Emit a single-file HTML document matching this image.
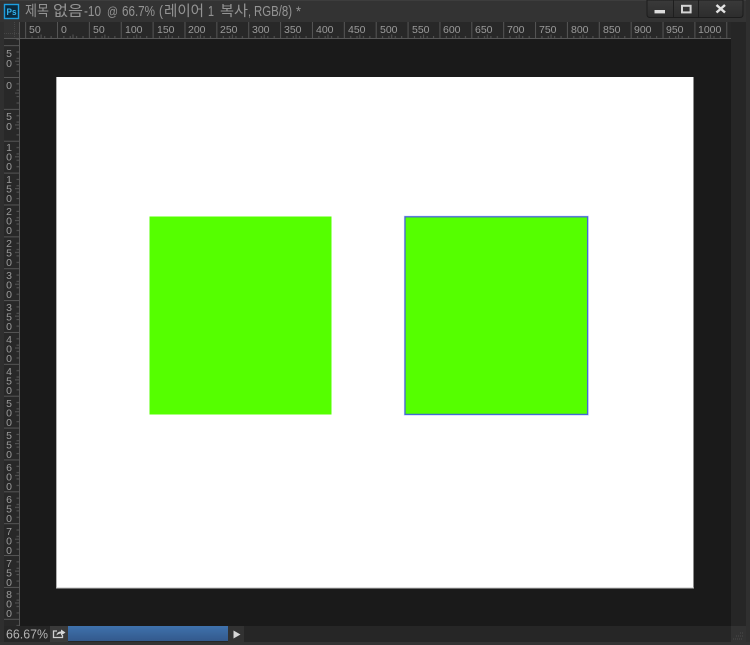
<!DOCTYPE html>
<html>
<head>
<meta charset="utf-8">
<style>
html,body{margin:0;padding:0;width:750px;height:645px;overflow:hidden;background:#2f2f2f}
svg{display:block}
text{font-family:"Liberation Sans","Noto Sans CJK KR",sans-serif}
</style>
</head>
<body>
<svg width="750" height="645" viewBox="0 0 750 645" xmlns="http://www.w3.org/2000/svg">
<defs>
<filter id="soft" x="-5%" y="-5%" width="110%" height="110%"><feGaussianBlur stdDeviation="0.35"/></filter>
<filter id="soft2" x="-5%" y="-5%" width="110%" height="110%"><feGaussianBlur stdDeviation="0.25"/></filter>
<pattern id="ht" x="57" y="22" width="31.87" height="17" patternUnits="userSpaceOnUse">
<path d="M0.5 0V17M6.9 14V17M13.2 14V17M19.6 14V17M26 14V17M16 12.5V17" stroke="#555555" stroke-width="1" fill="none"/>
</pattern>
<pattern id="vt" x="4" y="77" width="16" height="31.87" patternUnits="userSpaceOnUse">
<path d="M0 0.5H16M12.5 6.9H16M12.5 13.2H16M12.5 19.6H16M12.5 26H16M11 16H16" stroke="#555555" stroke-width="1" fill="none"/>
</pattern>
<linearGradient id="bar" x1="0" y1="0" x2="0" y2="1"><stop offset="0" stop-color="#3f72ad"/><stop offset="1" stop-color="#33598c"/></linearGradient>
<linearGradient id="btn" x1="0" y1="0" x2="0" y2="1"><stop offset="0" stop-color="#3a3a3a"/><stop offset="1" stop-color="#2d2d2d"/></linearGradient>
</defs>

<rect width="750" height="645" fill="#2f2f2f"/>
<rect x="0" y="0" width="750" height="22" fill="#333333"/>
<rect x="0" y="0" width="750" height="1" fill="#3d3d3d"/>

<!-- Ps logo -->
<rect x="4.5" y="4.5" width="14" height="14" fill="#0b2b3f" stroke="#1d9fe0" stroke-width="1.4"/>
<text x="6.5" y="15" font-size="9.5" font-weight="bold" fill="#36b3ee" textLength="10" lengthAdjust="spacingAndGlyphs" filter="url(#soft2)">Ps</text>

<!-- Title -->
<g font-size="14" fill="#949494" filter="url(#soft)">
<text x="25" y="16" font-size="14.5" textLength="24" lengthAdjust="spacingAndGlyphs">제목</text>
<text x="53" y="16" font-size="14.5" textLength="30" lengthAdjust="spacingAndGlyphs">없음</text>
<text x="84" y="16" font-size="15" textLength="17" lengthAdjust="spacingAndGlyphs">-10</text>
<text x="107" y="16" font-size="13" textLength="11" lengthAdjust="spacingAndGlyphs">@</text>
<text x="122" y="16" font-size="15" textLength="33" lengthAdjust="spacingAndGlyphs">66.7%</text>
<text x="159" y="16" font-size="15" textLength="4" lengthAdjust="spacingAndGlyphs">(</text>
<text x="164" y="16" font-size="14.5" textLength="40" lengthAdjust="spacingAndGlyphs">레이어</text>
<text x="208" y="16" font-size="15" textLength="6" lengthAdjust="spacingAndGlyphs">1</text>
<text x="220" y="16" font-size="14.5" textLength="28" lengthAdjust="spacingAndGlyphs">복사</text>
<text x="248" y="16" textLength="3" lengthAdjust="spacingAndGlyphs">,</text>
<text x="254" y="16" font-size="15" textLength="38" lengthAdjust="spacingAndGlyphs">RGB/8)</text>
<text x="296" y="16" textLength="5" lengthAdjust="spacingAndGlyphs">*</text>
</g>

<!-- Window buttons -->
<path d="M647 0V14.5Q647 17.5 650 17.5H740Q743 17.5 743 14.5V0Z" fill="url(#btn)" stroke="#1c1c1c"/>
<path d="M673.5 0V17M698.5 0V17" stroke="#1e1e1e"/>
<rect x="654.5" y="10" width="10.5" height="3.4" fill="#dcdcdc"/>
<rect x="682" y="5.8" width="8.6" height="6.6" fill="none" stroke="#d4d4d4" stroke-width="2"/>
<path d="M716.5 5L725 12.5M725 5L716.5 12.5" stroke="#e2e2e2" stroke-width="2.5" fill="none"/>

<!-- Rulers -->
<rect x="4" y="22" width="727" height="17" fill="#282828"/>
<rect x="4" y="22" width="16" height="604" fill="#282828"/>
<rect x="20" y="22" width="711" height="16" fill="url(#ht)"/>
<rect x="4" y="39" width="16" height="587" fill="url(#vt)"/>
<rect x="4" y="22" width="15" height="16" fill="#333333"/>
<path d="M4 33.5H19M14.5 22V38" stroke="#464646" stroke-dasharray="1 1"/>
<rect x="4" y="38" width="727" height="1" fill="#575757"/>
<rect x="19" y="22" width="1" height="604" fill="#575757"/>

<g font-size="10.5" fill="#9a9a9a" filter="url(#soft)">
<text x="29" y="33">50</text>
<text x="61" y="33">0</text>
<text x="93" y="33">50</text>
<text x="125" y="33">100</text>
<text x="157" y="33">150</text>
<text x="188" y="33">200</text>
<text x="220" y="33">250</text>
<text x="252" y="33">300</text>
<text x="284" y="33">350</text>
<text x="316" y="33">400</text>
<text x="348" y="33">450</text>
<text x="380" y="33">500</text>
<text x="412" y="33">550</text>
<text x="443" y="33">600</text>
<text x="475" y="33">650</text>
<text x="507" y="33">700</text>
<text x="539" y="33">750</text>
<text x="571" y="33">800</text>
<text x="603" y="33">850</text>
<text x="634" y="33">900</text>
<text x="666" y="33">950</text>
<text x="698" y="33">1000</text>
</g>

<g font-size="10.5" fill="#9a9a9a" text-anchor="middle" filter="url(#soft)">
<text x="9" y="57">5</text><text x="9" y="67">0</text>
<text x="9" y="89">0</text>
<text x="9" y="120">5</text><text x="9" y="130">0</text>
<text x="9" y="151">1</text><text x="9" y="160.5">0</text><text x="9" y="170">0</text>
<text x="9" y="183">1</text><text x="9" y="192.5">5</text><text x="9" y="202">0</text>
<text x="9" y="215">2</text><text x="9" y="224.5">0</text><text x="9" y="234">0</text>
<text x="9" y="247">2</text><text x="9" y="256.5">5</text><text x="9" y="266">0</text>
<text x="9" y="279">3</text><text x="9" y="288.5">0</text><text x="9" y="298">0</text>
<text x="9" y="311">3</text><text x="9" y="320.5">5</text><text x="9" y="330">0</text>
<text x="9" y="343">4</text><text x="9" y="352.5">0</text><text x="9" y="362">0</text>
<text x="9" y="375">4</text><text x="9" y="384.5">5</text><text x="9" y="394">0</text>
<text x="9" y="407">5</text><text x="9" y="416.5">0</text><text x="9" y="426">0</text>
<text x="9" y="439">5</text><text x="9" y="448.5">5</text><text x="9" y="458">0</text>
<text x="9" y="471">6</text><text x="9" y="480.5">0</text><text x="9" y="490">0</text>
<text x="9" y="503">6</text><text x="9" y="512.5">5</text><text x="9" y="522">0</text>
<text x="9" y="535">7</text><text x="9" y="544.5">0</text><text x="9" y="554">0</text>
<text x="9" y="567">7</text><text x="9" y="576.5">5</text><text x="9" y="586">0</text>
<text x="9" y="598">8</text><text x="9" y="607.5">0</text><text x="9" y="617">0</text>
</g>

<!-- Workspace -->
<rect x="20" y="39" width="711" height="587" fill="#1a1a1a"/>
<rect x="731" y="22" width="15" height="604" fill="#262626"/>
<rect x="746" y="0" width="4" height="645" fill="#2f2f2f"/>

<!-- Canvas -->
<rect x="56.5" y="77" width="637" height="511" fill="#ffffff"/>
<rect x="56" y="77" width="1" height="511" fill="#b0b0b0"/>
<rect x="56" y="587.5" width="638" height="1" fill="#c0c0c0"/>

<!-- Shapes -->
<rect x="149.5" y="216.5" width="182" height="198" fill="#55ff00"/>
<rect x="404.2" y="215.9" width="184.2" height="199.6" fill="none" stroke="#dfe3ff" stroke-width="0.8"/>
<rect x="405" y="216.8" width="182.6" height="197.6" fill="#55ff00" stroke="#4468d4" stroke-width="1.3"/>

<!-- Bottom bar -->
<rect x="0" y="626" width="746" height="16" fill="#262626"/>
<rect x="0" y="642" width="750" height="3" fill="#333333"/>
<rect x="0" y="626" width="4" height="16" fill="#2f2f2f"/>
<text x="6" y="638.5" font-size="13" fill="#b4b4b4" textLength="42" lengthAdjust="spacingAndGlyphs" filter="url(#soft2)">66.67%</text>
<rect x="50" y="626" width="18" height="16" fill="#3a3a3a"/>
<path d="M57 631H53.5V637.5H62.5V635" fill="none" stroke="#d0d0d0" stroke-width="1.3"/>
<path d="M56.5 635.5Q57 631.5 61 631.5V629.5L65.5 632.5L61 635.5V633.5Q58.5 633.5 56.5 635.5Z" fill="#d8d8d8"/>
<rect x="68" y="626" width="160" height="15" fill="url(#bar)"/>
<rect x="228" y="626" width="16" height="16" fill="#323232"/>
<path d="M233.5 630.5L240.5 634.5L233.5 638.5Z" fill="#d6d6d6"/>
<rect x="731" y="626" width="15" height="16" fill="#323232"/>
<path d="M733 639H743M736 636H743M740 633H743" stroke="#4a4a4a" stroke-dasharray="1 1"/>
</svg>
</body>
</html>
